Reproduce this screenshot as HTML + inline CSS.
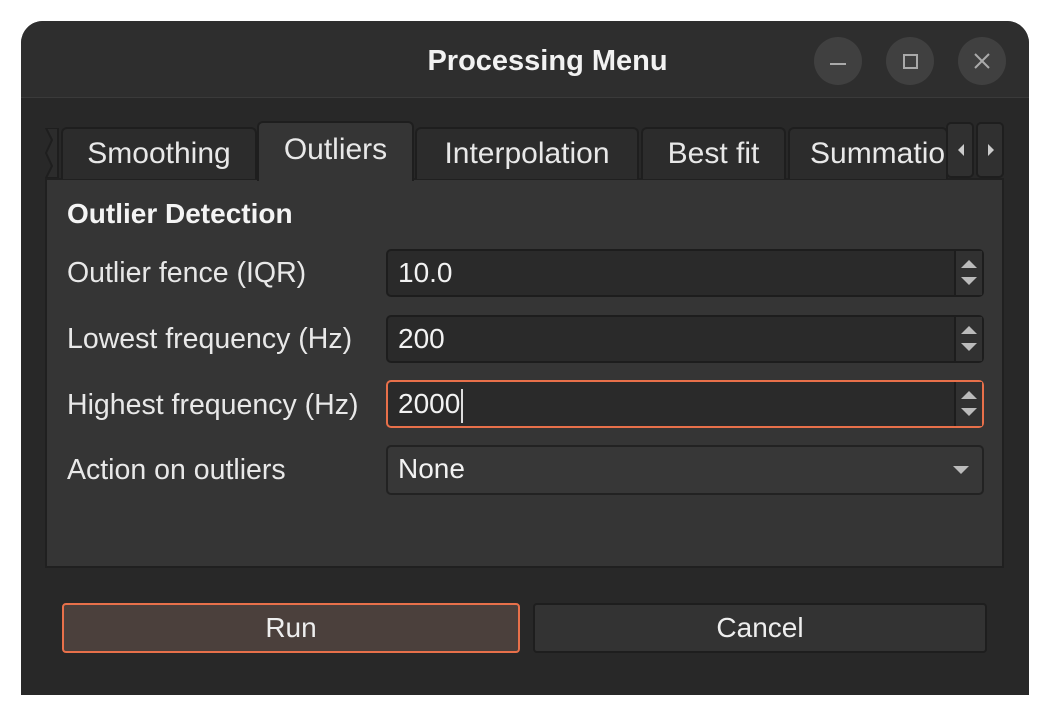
<!DOCTYPE html>
<html><head><style>
body{margin:0;width:1050px;height:716px;background:#fff;position:relative;overflow:hidden;font-family:"Liberation Sans","DejaVu Sans",sans-serif;color:#eee}
.a{position:absolute;box-sizing:border-box}
.win{left:21px;top:21px;width:1008px;height:674px;background:#282828;border-radius:22px 22px 0 0;overflow:hidden}
.title{left:0;top:0;width:1008px;height:77px;background:#2e2e2e;border-bottom:1px solid #3a3a3a}
.tt{left:0;width:1095px;text-align:center;font-weight:bold;font-size:29px;color:#f2f2f2}
.cb{width:48px;height:48px;border-radius:50%;background:#404040;top:37px}
.tab{top:127px;height:52px;background:#2c2c2c;border:2px solid #1e1e1e;border-bottom:none;border-radius:6px 6px 0 0;font-size:30px;color:#e8e8e8;text-align:center;line-height:50px;overflow:hidden;white-space:nowrap}
.panel{left:45px;top:178px;width:959px;height:390px;background:#353535;border:2px solid #202020}
.lbl{left:67px;font-size:28.5px;color:#e8e8e8}
.fld{left:386px;width:598px;height:48px;background:#2a2a2a;border:2px solid #1d1d1d;border-radius:5px;font-size:28px;padding-left:10px;line-height:44px;color:#f2f2f2}
.spin{position:absolute;right:0;top:0;width:26px;height:44px;background:#313131;border-left:2px solid #1d1d1d}
.btn{top:603px;height:50px;border-radius:4px;font-size:28px;text-align:center;line-height:46px;color:#eee}
</style></head><body>
<div class="a win">
 <div class="a title"></div>
</div>
<div class="a tt" style="top:45px">Processing Menu</div>
<div class="a cb" style="left:814px"><div class="a" style="left:16px;top:26px;width:16px;height:2px;background:#aaa"></div></div>
<div class="a cb" style="left:886px"><div class="a" style="left:17px;top:17px;width:15px;height:15px;border:2px solid #aaa"></div></div>
<div class="a cb" style="left:958px"><svg class="a" style="left:16px;top:16px" width="16" height="16"><path d="M1 1L15 15M15 1L1 15" stroke="#aaa" stroke-width="2"/></svg></div>

<div class="a panel"></div>
<svg class="a" style="left:44px;top:128px" width="16" height="50"><path d="M2 0L14 0L14 50L2 50L8 38L2 25L8 12Z" fill="#2c2c2c" stroke="#1e1e1e" stroke-width="2"/></svg>
<div class="a tab" style="left:61px;width:196px">Smoothing</div>
<div class="a tab" style="left:257px;width:157px;top:121px;height:60px;background:#353535;line-height:54px">Outliers</div>
<div class="a tab" style="left:415px;width:224px">Interpolation</div>
<div class="a tab" style="left:641px;width:145px">Best fit</div>
<div class="a tab" style="left:788px;width:160px;text-align:left;padding-left:20px">Summation</div>
<div class="a" style="left:946px;top:122px;width:28px;height:56px;background:#303030;border:2px solid #1e1e1e;border-radius:5px"><svg class="a" style="left:8px;top:19px" width="10" height="14"><path d="M8 1L2 7L8 13Z" fill="#ccc"/></svg></div>
<div class="a" style="left:976px;top:122px;width:28px;height:56px;background:#303030;border:2px solid #1e1e1e;border-radius:5px"><svg class="a" style="left:8px;top:19px" width="10" height="14"><path d="M2 1L8 7L2 13Z" fill="#ccc"/></svg></div>

<div class="a" style="left:67px;top:198px;font-size:28px;font-weight:bold;color:#f4f4f4">Outlier Detection</div>
<div class="a lbl" style="top:257px">Outlier fence (IQR)</div>
<div class="a lbl" style="top:323px">Lowest frequency (Hz)</div>
<div class="a lbl" style="top:389px">Highest frequency (Hz)</div>
<div class="a lbl" style="top:454px">Action on outliers</div>

<div class="a fld" style="top:249px">10.0<div class="spin"><svg width="26" height="44"><path d="M5 17L13 9L21 17Z M5 26L13 34L21 26Z" fill="#bbb"/></svg></div></div>
<div class="a fld" style="top:315px">200<div class="spin"><svg width="26" height="44"><path d="M5 17L13 9L21 17Z M5 26L13 34L21 26Z" fill="#bbb"/></svg></div></div>
<div class="a fld" style="top:380px;border-color:#e8704a">2000<span style="display:inline-block;width:2px;height:34px;background:#ddd;vertical-align:middle;margin-left:1px"></span><div class="spin"><svg width="26" height="44"><path d="M5 17L13 9L21 17Z M5 26L13 34L21 26Z" fill="#bbb"/></svg></div></div>
<div class="a fld" style="top:445px;height:50px;background:#373737;border-color:#222">None<svg class="a" style="right:12px;top:18px" width="18" height="10"><path d="M1 1L17 1L9 9Z" fill="#bbb"/></svg></div>

<div class="a btn" style="left:62px;width:458px;background:#4b403c;border:2px solid #e8704a">Run</div>
<div class="a btn" style="left:533px;width:454px;background:#333;border:2px solid #1e1e1e">Cancel</div>
</body></html>
